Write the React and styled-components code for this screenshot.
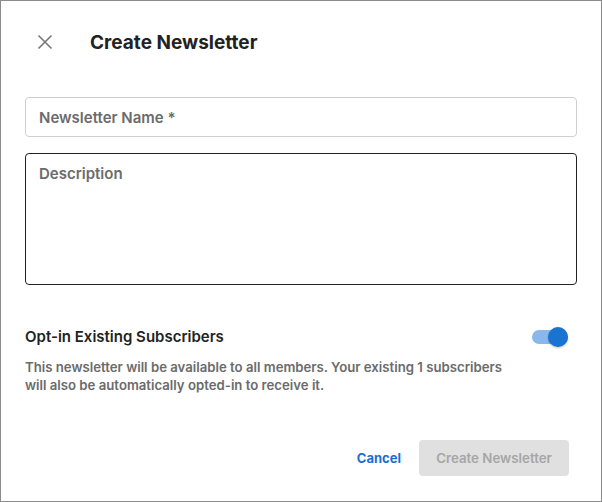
import React, { useState } from "react";
import styled, { createGlobalStyle } from "styled-components";

const Global = createGlobalStyle`
  html, body {
    margin: 0;
    padding: 0;
    background: #fff;
  }
  * {
    box-sizing: border-box;
  }
`;

const Dialog = styled.div`
  width: 602px;
  height: 502px;
  border: 1px solid #8c8c8c;
  background: #fff;
  display: flex;
  flex-direction: column;
  padding: 0 24px;
  font-family: "Inter", "Noto Sans", sans-serif;
  color: #222;
`;

const Header = styled.div`
  display: flex;
  align-items: center;
  height: 82px;
  gap: 37px;
  padding-left: 12px;
`;

const CloseButton = styled.button`
  border: 0;
  background: none;
  padding: 0;
  width: 16px;
  height: 16px;
  display: flex;
  cursor: pointer;
`;

const Title = styled.h1`
  margin: 0;
  font-size: 19px;
  font-weight: 700;
  color: #222;
`;

const Field = styled.div`
  border: 1px solid ${({ focused }) => (focused ? "#222" : "#cfcfcf")};
  border-radius: 4px;
  height: ${({ tall }) => (tall ? "132px" : "40px")};
  margin-top: ${({ gap }) => gap}px;
  padding: ${({ tall }) => (tall ? "10px 13px" : "0 13px")};
  display: flex;
  align-items: ${({ tall }) => (tall ? "flex-start" : "center")};
`;

const Placeholder = styled.span`
  font-size: 15px;
  font-weight: 600;
  color: #6b6b6b;
`;

const OptRow = styled.div`
  display: flex;
  align-items: center;
  justify-content: space-between;
  margin-top: 42px;
  padding-right: 9px;
`;

const OptLabel = styled.div`
  font-size: 15px;
  font-weight: 600;
  color: #222;
`;

const Track = styled.button`
  position: relative;
  width: 36px;
  height: 14px;
  border: 0;
  padding: 0;
  border-radius: 7px;
  background: ${({ on }) => (on ? "#89b8ec" : "#c9c9c9")};
  cursor: pointer;
`;

const Knob = styled.span`
  position: absolute;
  top: -3px;
  left: ${({ on }) => (on ? "16px" : "0")};
  width: 20px;
  height: 20px;
  border-radius: 50%;
  background: ${({ on }) => (on ? "#1a73d1" : "#f5f5f5")};
  box-shadow: 0 1px 2px rgba(0, 0, 0, 0.25);
`;

const Note = styled.p`
  margin: 12px 0 0;
  width: 492px;
  font-size: 13.2px;
  line-height: 18px;
  font-weight: 600;
  color: #6b6b6b;
`;

const Footer = styled.div`
  margin-top: auto;
  height: 61px;
  display: flex;
  align-items: flex-start;
  justify-content: flex-end;
  gap: 18px;
  padding-right: 8px;
`;

const LinkButton = styled.button`
  border: 0;
  background: none;
  height: 36px;
  padding: 0;
  font-family: inherit;
  font-size: 13px;
  font-weight: 700;
  color: #1a6fcf;
  cursor: pointer;
`;

const PrimaryButton = styled.button`
  border: 0;
  border-radius: 4px;
  height: 36px;
  width: 150px;
  font-family: inherit;
  font-size: 13.3px;
  font-weight: 600;
  background: ${({ disabled }) => (disabled ? "#e0e0e0" : "#1a73d1")};
  color: ${({ disabled }) => (disabled ? "#a6a6a6" : "#fff")};
`;

export default function App() {
  const [optIn, setOptIn] = useState(true);

  return (
    <>
      <Global />
      <Dialog>
        <Header>
          <CloseButton aria-label="Close">
            <svg width="16" height="16" viewBox="0 0 16 16">
              <path d="M1.5 1.5 L14.5 14.5 M14.5 1.5 L1.5 14.5" stroke="#777" strokeWidth="1.6" />
            </svg>
          </CloseButton>
          <Title>Create Newsletter</Title>
        </Header>

        <Field gap={14}>
          <Placeholder>Newsletter Name *</Placeholder>
        </Field>
        <Field gap={16} tall focused>
          <Placeholder>Description</Placeholder>
        </Field>

        <OptRow>
          <OptLabel>Opt-in Existing Subscribers</OptLabel>
          <Track on={optIn} onClick={() => setOptIn(!optIn)}>
            <Knob on={optIn} />
          </Track>
        </OptRow>
        <Note>
          This newsletter will be available to all members. Your existing 1 subscribers
          will also be automatically opted-in to receive it.
        </Note>

        <Footer>
          <LinkButton>Cancel</LinkButton>
          <PrimaryButton disabled>Create Newsletter</PrimaryButton>
        </Footer>
      </Dialog>
    </>
  );
}
